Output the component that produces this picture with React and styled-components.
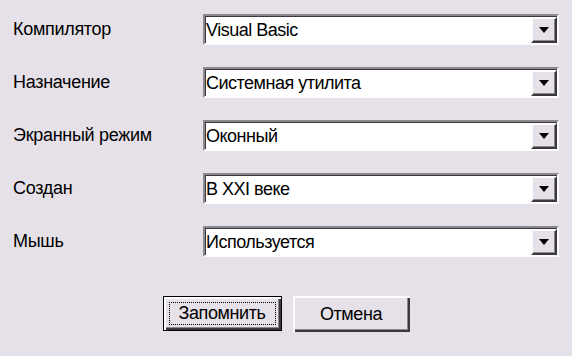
import React from "react";
import styled, { createGlobalStyle } from "styled-components";

const Global = createGlobalStyle`
  html, body {
    margin: 0;
    padding: 0;
    background: #e6e1e8;
  }
  body {
    font-family: "Liberation Sans", Arial, sans-serif;
    color: #000;
  }
`;

const Dialog = styled.div`
  width: 572px;
  height: 356px;
  box-sizing: border-box;
  padding: 14px 0 0 13px;
  background: #e6e1e8;
`;

const Fields = styled.div`
  display: grid;
  grid-template-columns: 190px 356px;
  row-gap: 22px;
  align-items: center;
`;

const Label = styled.div`
  font-size: 18px;
  line-height: 31px;
  letter-spacing: -0.3px;
  margin-top: -1px;
`;

const Combo = styled.div`
  display: flex;
  height: 31px;
  box-sizing: border-box;
  border-top: 2px solid #8c8890;
  border-left: 2px solid #8c8890;
  border-right: 2px solid #fdfcfd;
  border-bottom: 2px solid #fdfcfd;
  box-shadow: inset 1px 1px 0 #3a383c;
  background: #fff;
`;

const ComboText = styled.div`
  flex: 1;
  padding-left: 1px;
  padding-top: 1px;
  font-size: 18px;
  line-height: 26px;
  letter-spacing: -0.5px;
`;

const ArrowButton = styled.div`
  width: 26px;
  margin: 1px 0 0 0;
  box-sizing: border-box;
  background: #e6e1e8;
  border-top: 2px solid #fdfcfd;
  border-left: 2px solid #fdfcfd;
  border-right: 2px solid #3a383c;
  border-bottom: 2px solid #3a383c;
  box-shadow: inset -1px -1px 0 #8c8890;
  display: flex;
  align-items: center;
  justify-content: center;
`;

const Buttons = styled.div`
  display: flex;
  justify-content: center;
  gap: 11px;
  margin-top: 39px;
  padding-right: 13px;
`;

const Button = styled.div`
  width: ${(p) => (p.$default ? 119 : 117)}px;
  height: ${(p) => (p.$default ? 35 : 36)}px;
  box-sizing: border-box;
  background: #e6e1e8;
  font-size: 18px;
  letter-spacing: -0.4px;
  display: flex;
  align-items: center;
  justify-content: center;
  border: ${(p) => (p.$default ? "1px solid #000" : "0")};
  box-shadow: inset 2px 2px 0 #fdfcfd, inset -2px -2px 0 #3a383c,
    inset -3px -3px 0 #8c8890;
  padding: 5px;
`;

const Focus = styled.div`
  flex: 1;
  align-self: stretch;
  display: flex;
  align-items: center;
  justify-content: center;
  outline: ${(p) => (p.$on ? "1px dotted #000" : "none")};
  outline-offset: -1px;
`;

const Arrow = () => (
  <svg width="10" height="6" viewBox="0 0 10 6">
    <path d="M0 0 H10 L5 6 Z" fill="#000" />
  </svg>
);

const rows = [
  ["Компилятор", "Visual Basic"],
  ["Назначение", "Системная утилита"],
  ["Экранный режим", "Оконный"],
  ["Создан", "В XXI веке"],
  ["Мышь", "Используется"],
];

export default function App() {
  return (
    <>
      <Global />
      <Dialog>
        <Fields>
          {rows.map(([label, value]) => (
            <React.Fragment key={label}>
              <Label>{label}</Label>
              <Combo>
                <ComboText>{value}</ComboText>
                <ArrowButton>
                  <Arrow />
                </ArrowButton>
              </Combo>
            </React.Fragment>
          ))}
        </Fields>
        <Buttons>
          <Button $default>
            <Focus $on>Запомнить</Focus>
          </Button>
          <Button>
            <Focus>Отмена</Focus>
          </Button>
        </Buttons>
      </Dialog>
    </>
  );
}
